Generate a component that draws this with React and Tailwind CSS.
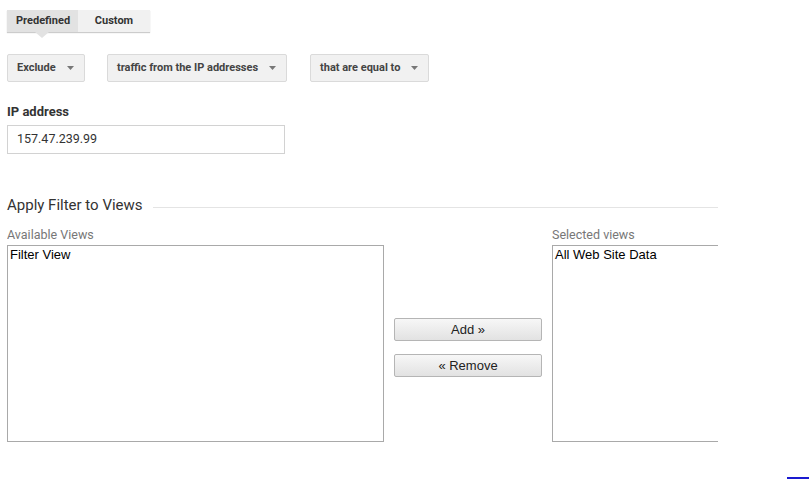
import React from "react";

function Caret() {
  return (
    <svg width="7" height="4" viewBox="0 0 7 4" className="ml-auto shrink-0">
      <path d="M0 0 L7 0 L3.5 4 Z" fill="#777" />
    </svg>
  );
}

function Drop({ label, w }) {
  return (
    <div
      className={`flex items-center h-[28px] ${w} pl-[9px] pr-[10px] bg-[#f1f1f1] border border-[#dadada] rounded-[2px] text-[11px] font-bold text-[#444]`}
    >
      <span>{label}</span>
      <Caret />
    </div>
  );
}

export default function App() {
  return (
    <div
      className="w-[809px] h-[479px] overflow-hidden bg-white text-[#333]"
      style={{ fontFamily: "Roboto, 'Liberation Sans', sans-serif" }}
    >
      <div className="pl-[7px] pt-[10px]">
        {/* tabs */}
        <div className="relative flex w-fit h-[22px] shadow-[0_1px_1px_rgba(0,0,0,0.2)]">
          <div className="relative flex items-center px-[9px] bg-[#e2e2e2] text-[11px] font-bold text-[#333] w-[71px]">
            Predefined
            <div className="absolute left-[28px] top-[22px] w-0 h-0 border-l-[7px] border-r-[7px] border-t-[6px] border-l-transparent border-r-transparent border-t-[#e2e2e2]" />
          </div>
          <div className="flex items-center justify-center w-[72px] bg-[#f1f1f1] text-[11px] font-bold text-[#333]">
            Custom
          </div>
        </div>

        {/* dropdowns */}
        <div className="flex mt-[22px]">
          <Drop label="Exclude" w="w-[78px]" />
          <div className="ml-[22px]">
            <Drop label="traffic from the IP addresses" w="w-[180px]" />
          </div>
          <div className="ml-[23px]">
            <Drop label="that are equal to" w="w-[119px]" />
          </div>
        </div>

        {/* IP address */}
        <div className="mt-[22px] text-[13px] font-bold text-[#333] leading-[16px]">IP address</div>
        <div className="mt-[5px] w-[278px] h-[29px] border border-[#d2d2d2] flex items-center pl-[9px] text-[12.5px] text-[#333]">
          157.47.239.99
        </div>

        {/* section */}
        <div className="mt-[42px] flex items-center w-[711px]">
          <span className="text-[15px] text-[#333] leading-[18px]">Apply Filter to Views</span>
          <div className="ml-[10px] flex-1 h-px bg-[#e4e4e4] mt-[4px]" />
        </div>

        <div className="mt-[13px] w-[711px] overflow-hidden flex">
          <div className="flex flex-col shrink-0">
            <span className="text-[12.5px] text-[#777] leading-[15px]">Available Views</span>
            <div
              className="mt-[3px] w-[377px] h-[197px] border border-[#a9a9a9] px-[2px] pt-[1px] text-[13px] text-black leading-[15px]"
              style={{ fontFamily: "'Liberation Sans', Arial, sans-serif" }}
            >
              Filter View
            </div>
          </div>
          <div className="flex flex-col shrink-0 ml-[10px] pt-[91px] gap-[13px]">
            {["Add \u00bb", "\u00ab Remove"].map((t) => (
              <div
                key={t}
                className="w-[148px] h-[23px] flex items-center justify-center border border-[#b5b5b5] rounded-[2px] bg-gradient-to-b from-[#f7f7f7] to-[#e2e2e2] text-[13px] text-[#222]"
                style={{ fontFamily: "'Liberation Sans', Arial, sans-serif" }}
              >
                {t}
              </div>
            ))}
          </div>
          <div className="flex flex-col shrink-0 ml-[10px]">
            <span className="text-[12.5px] text-[#777] leading-[15px]">Selected views</span>
            <div
              className="mt-[3px] w-[200px] h-[197px] border border-[#a9a9a9] px-[2px] pt-[1px] text-[13px] text-black leading-[15px]"
              style={{ fontFamily: "'Liberation Sans', Arial, sans-serif" }}
            >
              All Web Site Data
            </div>
          </div>
        </div>
      </div>

      <div className="flex justify-end mt-[35px]">
        <div className="w-[22px] h-[2px] bg-[#1a1ad0]" />
      </div>
    </div>
  );
}
